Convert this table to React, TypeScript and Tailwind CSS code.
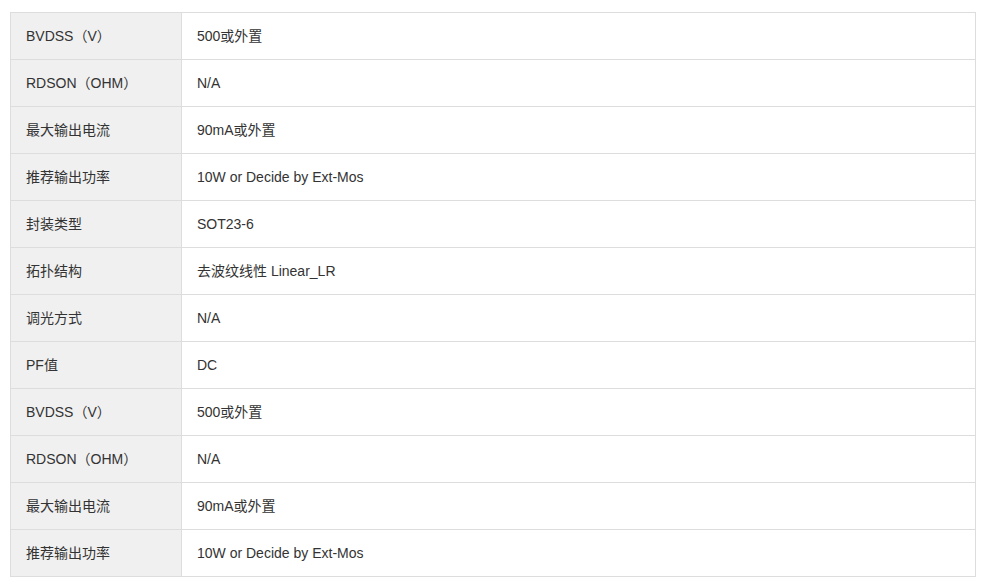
const rows: [string, string][] = [
  ["BVDSS（V）", "500或外置"],
  ["RDSON（OHM）", "N/A"],
  ["最大输出电流", "90mA或外置"],
  ["推荐输出功率", "10W or Decide by Ext-Mos"],
  ["封装类型", "SOT23-6"],
  ["拓扑结构", "去波纹线性 Linear_LR"],
  ["调光方式", "N/A"],
  ["PF值", "DC"],
  ["BVDSS（V）", "500或外置"],
  ["RDSON（OHM）", "N/A"],
  ["最大输出电流", "90mA或外置"],
  ["推荐输出功率", "10W or Decide by Ext-Mos"],
];

export default function App() {
  return (
    <div className="bg-white w-[986px] h-[587px] pt-[12px] pl-[10px] font-['Liberation_Sans','Noto_Sans_CJK_SC',sans-serif] text-[14px] text-[#333]">
      <table className="border-collapse w-[966px]">
        <tbody>
          {rows.map(([k, v], i) => (
            <tr key={i} className="h-[47px]">
              <td className="w-[171px] border border-[#ddd] bg-[#f0f0f0] pl-[15px]">{k}</td>
              <td className="border border-[#ddd] pl-[15px]">{v}</td>
            </tr>
          ))}
        </tbody>
      </table>
    </div>
  );
}
